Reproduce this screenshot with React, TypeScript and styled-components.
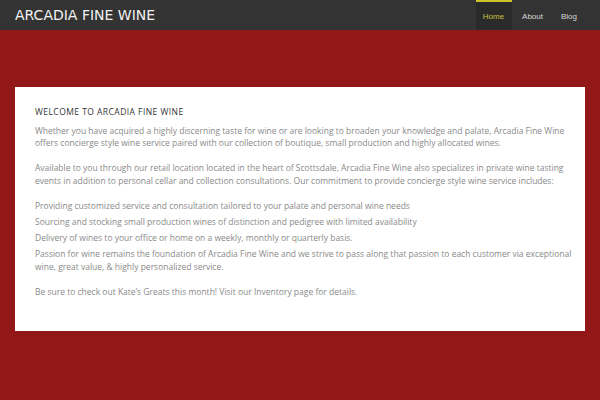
import React from "react";
import styled, { createGlobalStyle } from "styled-components";

const Global = createGlobalStyle`
  html, body { margin: 0; padding: 0; }
  body { background: #921717; font-family: "Open Sans", "Liberation Sans", Arial, sans-serif; }
`;

const Header = styled.header`
  height: 30px;
  background: #333333;
  display: flex;
  align-items: center;
  justify-content: space-between;
  padding: 0 0 0 15px;
`;

const Brand = styled.div`
  font-family: "DejaVu Sans", sans-serif;
  color: #f2f2f2;
  font-size: 14px;
  line-height: 30px;
`;

const Nav = styled.nav`
  display: flex;
  height: 30px;
  padding-right: 15px;
`;

const NavItem = styled.a<{ $active?: boolean }>`
  display: flex;
  align-items: center;
  padding: 0 8px 0 ${(p) => (p.$active ? "7px" : "8px")};
  margin-left: ${(p) => (p.$active ? "0" : "2px")};
  font-family: "Liberation Sans", Arial, sans-serif;
  font-size: 8px;
  color: ${(p) => (p.$active ? "#c9c13b" : "#d8d8d8")};
  background: ${(p) => (p.$active ? "#2a2a2a" : "transparent")};
  border-top: 2px solid ${(p) => (p.$active ? "#cbc22a" : "transparent")};
  box-sizing: border-box;
  text-decoration: none;
`;

const Main = styled.main`
  padding: 57px 15px 0 15px;
`;

const Card = styled.section`
  background: #ffffff;
  padding: 19px 8px 31px 20px;
  height: 244px;
  box-sizing: border-box;
`;

const Heading = styled.h1`
  margin: 0 0 6px 0;
  font-size: 8.5px;
  letter-spacing: 0.45px;
  font-weight: normal;
  color: #333333;
  line-height: 12.5px;
`;

const Para = styled.p`
  margin: 0 0 12.5px 0;
  font-size: 8.5px;
  line-height: 12.5px;
  color: #8a8a8a;
`;

const List = styled.ul`
  list-style: none;
  margin: 0 0 12.5px 0;
  padding: 0;
`;

const Item = styled.li`
  font-size: 8.5px;
  line-height: 12.5px;
  color: #8a8a8a;
  margin-bottom: 3.8px;
`;

export default function App() {
  return (
    <>
      <Global />
      <Header>
        <Brand>ARCADIA FINE WINE</Brand>
        <Nav>
          <NavItem $active>Home</NavItem>
          <NavItem>About</NavItem>
          <NavItem>Blog</NavItem>
        </Nav>
      </Header>
      <Main>
        <Card>
          <Heading>WELCOME TO ARCADIA FINE WINE</Heading>
          <Para>
            Whether you have acquired a highly discerning taste for wine or are looking to broaden your knowledge and palate, Arcadia Fine Wine offers concierge style wine service paired with our collection of boutique, small production and highly allocated wines.
          </Para>
          <Para>
            Available to you through our retail location located in the heart of Scottsdale, Arcadia Fine Wine also specializes in private wine tasting events in addition to personal cellar and collection consultations. Our commitment to provide concierge style wine service includes:
          </Para>
          <List>
            <Item>Providing customized service and consultation tailored to your palate and personal wine needs</Item>
            <Item>Sourcing and stocking small production wines of distinction and pedigree with limited availability</Item>
            <Item>Delivery of wines to your office or home on a weekly, monthly or quarterly basis.</Item>
            <Item>Passion for wine remains the foundation of Arcadia Fine Wine and we strive to pass along that passion to each customer via exceptional wine, great value, &amp; highly personalized service.</Item>
          </List>
          <Para>Be sure to check out Kate’s Greats this month! Visit our Inventory page for details.</Para>
        </Card>
      </Main>
    </>
  );
}
